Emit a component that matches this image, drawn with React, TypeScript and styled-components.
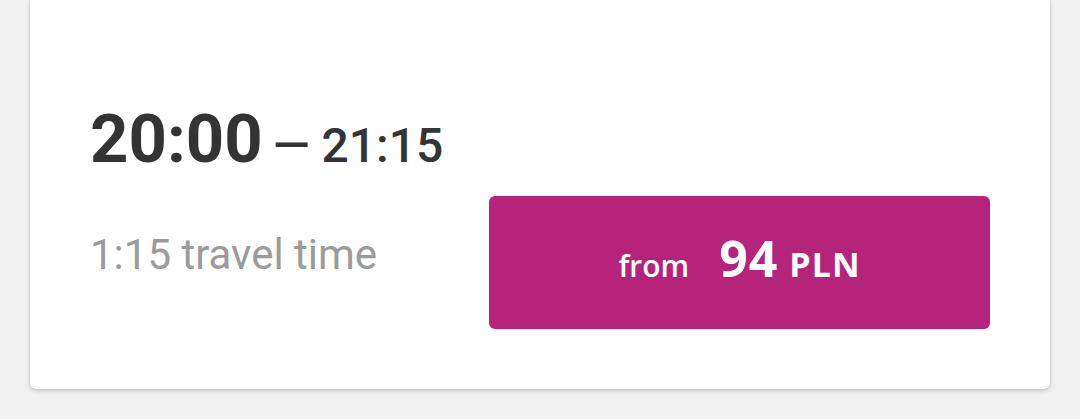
import * as React from 'react';
import styled, { createGlobalStyle } from 'styled-components';

const GlobalStyle = createGlobalStyle`
  html, body {
    margin: 0;
    padding: 0;
    background: #f1f1f1;
  }
  body {
    font-family: Roboto, 'Liberation Sans', sans-serif;
  }
`;

const colors = {
  text: '#343434',
  muted: '#9b9b9b',
  brand: '#b5247a',
  white: '#ffffff',
};

const Page = styled.div({
  padding: '0 30px',
  overflow: 'hidden',
  height: 419,
});

const Card = styled.section({
  display: 'flex',
  flexDirection: 'column',
  boxSizing: 'border-box',
  marginTop: -4,
  height: 393,
  padding: '110px 60px 0',
  background: colors.white,
  borderRadius: 6,
  boxShadow: '0 2px 4px rgba(0, 0, 0, 0.18), 0 0 2px rgba(0, 0, 0, 0.08)',
});

const Times = styled.div({
  display: 'flex',
  alignItems: 'baseline',
  color: colors.text,
  fontFamily: 'Roboto, sans-serif',
  lineHeight: 1,
});

const Departure = styled.span({
  fontSize: 67,
  fontWeight: 700,
});

const Arrival = styled.span({
  marginLeft: 10,
  fontSize: 48,
  fontWeight: 500,
});

const Details = styled.div({
  display: 'flex',
  justifyContent: 'space-between',
  alignItems: 'center',
  marginTop: 23,
});

const Duration = styled.span({
  marginBottom: 16,
  fontSize: 42,
  lineHeight: 1,
  color: colors.muted,
});

const PriceButton = styled.button({
  display: 'flex',
  justifyContent: 'center',
  alignItems: 'center',
  width: 501,
  height: 133,
  padding: '0 0 10px',
  border: 'none',
  borderRadius: 6,
  background: colors.brand,
  color: colors.white,
  fontFamily: '"Open Sans", sans-serif',
  cursor: 'pointer',
});

const Price = styled.span({
  display: 'flex',
  alignItems: 'baseline',
  lineHeight: 1,
});

const Label = styled.span({
  fontSize: 30,
  fontWeight: 600,
});

const Amount = styled.span({
  marginLeft: 30,
  fontSize: 50,
  fontWeight: 700,
  letterSpacing: 1,
});

const Currency = styled.span({
  marginLeft: 11,
  fontSize: 34,
  fontWeight: 700,
  letterSpacing: 1,
});

const App = () => (
  <Page>
    <GlobalStyle />
    <Card>
      <Times>
        <Departure>20:00</Departure>
        <Arrival>— 21:15</Arrival>
      </Times>
      <Details>
        <Duration>1:15 travel time</Duration>
        <PriceButton>
          <Price>
            <Label>from</Label>
            <Amount>94</Amount>
            <Currency>PLN</Currency>
          </Price>
        </PriceButton>
      </Details>
    </Card>
  </Page>
);

export default App;
